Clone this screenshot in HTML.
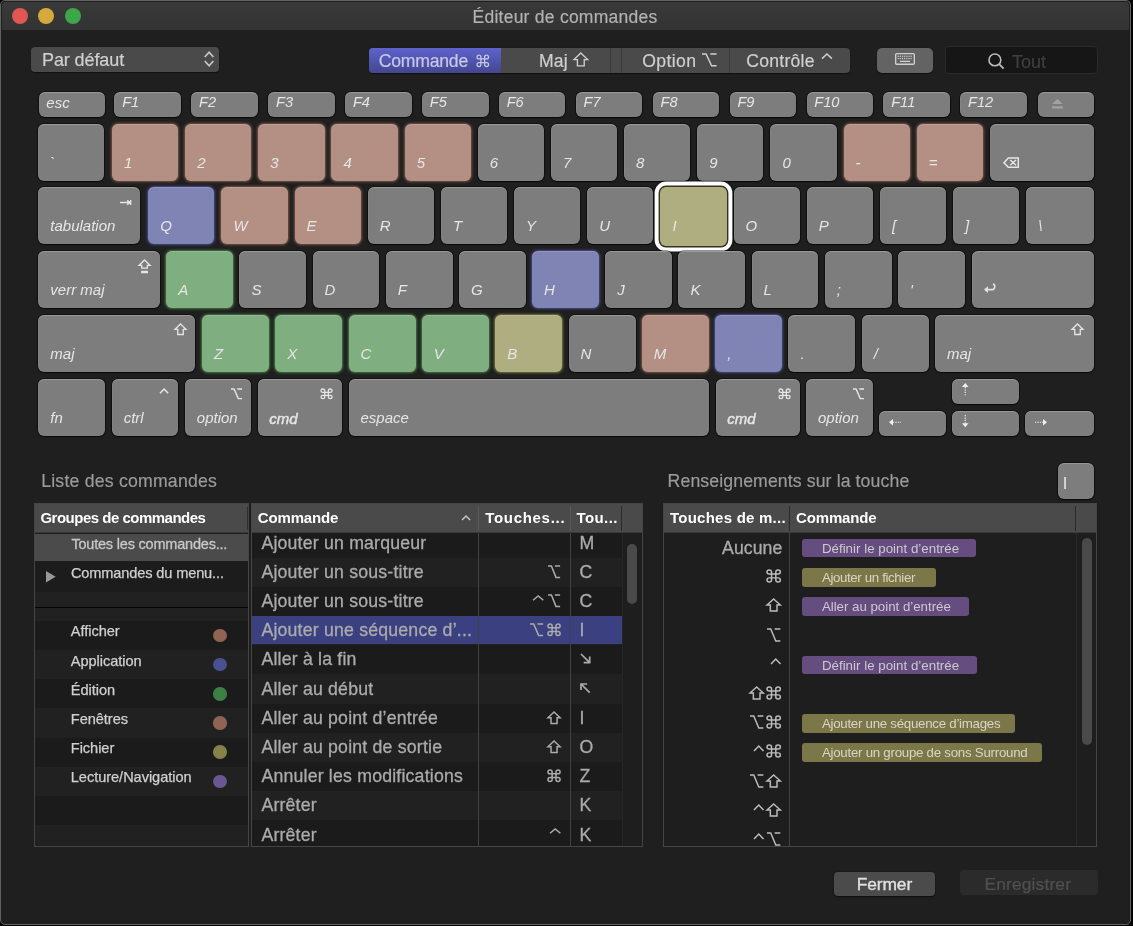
<!DOCTYPE html>
<html><head><meta charset="utf-8"><title>Éditeur de commandes</title>
<style>
html,body{margin:0;padding:0;}
body{width:1133px;height:926px;background:#000;overflow:hidden;position:relative;font-family:"Liberation Sans", sans-serif;}
#root{position:absolute;left:0;top:0;width:1133px;height:926px;will-change:transform;}
div{box-sizing:border-box;}
.k{position:absolute;background:#7d7d7d;border-radius:6px;box-shadow:0 0 0 0.8px rgba(0,0,0,0.55), 0 1px 1.5px rgba(0,0,0,0.5), inset 0 1px 0 rgba(255,255,255,0.22), inset 1px 0 0 rgba(255,255,255,0.05);}
.med{-webkit-text-stroke:0.25px currentColor;}
</style></head><body><div id="root">

<div style="position:absolute;left:0;top:0;width:1131px;height:924.6px;border-radius:5px;background:#1f1f1f;border:1.8px solid #626262"></div>
<div style="position:absolute;left:1.8px;top:1.8px;width:1127.4px;height:28.7px;border-radius:4px 4px 0 0;background:linear-gradient(#393939,#333333)"></div>
<div style="position:absolute;left:472.50px;top:8.99px;font-size:17.5px;line-height:17.5px;color:#b2b2b2;font-weight:normal;font-style:normal;letter-spacing:0.25px;white-space:nowrap;-webkit-text-stroke:0.2px #b2b2b2">Éditeur de commandes</div>
<div style="position:absolute;left:12.3px;top:8px;width:16px;height:16px;border-radius:50%;background:#df5750"></div>
<div style="position:absolute;left:38.4px;top:8px;width:16px;height:16px;border-radius:50%;background:#d5a93b"></div>
<div style="position:absolute;left:65.2px;top:8px;width:16px;height:16px;border-radius:50%;background:#3ba64a"></div>
<div style="position:absolute;left:31px;top:46.5px;width:188px;height:25.3px;border-radius:4px;background:#4a4a4a;box-shadow:0 0.5px 1px rgba(0,0,0,0.5)"></div>
<div style="position:absolute;left:42.00px;top:50.56px;font-size:18px;line-height:18px;color:#d0d0d0;font-weight:normal;font-style:normal;letter-spacing:-0.1px;white-space:nowrap;-webkit-text-stroke:0.2px #d0d0d0">Par défaut</div>
<svg style="position:absolute;left:204.20px;top:51.00px;overflow:visible" width="10.20" height="16.00" viewBox="0 0 10.2 16" preserveAspectRatio="xMinYMin meet"><path d="M0.8,6 L5.1,1.2 L9.4,6 M0.8,10 L5.1,14.8 L9.4,10" fill="none" stroke="#c8c8c8" stroke-width="1.7"/></svg>
<div style="position:absolute;left:369.2px;top:48px;width:480.5px;height:24.8px;border-radius:4px;background:#4a4a4a;overflow:hidden;box-shadow:0 0.5px 1px rgba(0,0,0,0.5)">
<div style="position:absolute;left:0;top:0;width:131.7px;height:24.8px;background:linear-gradient(#5e62cc,#43478f)"></div>
<div style="position:absolute;left:240.5px;top:0;width:1px;height:24.8px;background:#3c3c3c"></div>
<div style="position:absolute;left:251.5px;top:0;width:1px;height:24.8px;background:#3c3c3c"></div>
<div style="position:absolute;left:359.8px;top:0;width:1px;height:24.8px;background:#3c3c3c"></div>
</div>
<div style="position:absolute;left:378.70px;top:52.60px;font-size:17.6px;line-height:17.6px;color:#c6c8e8;font-weight:normal;font-style:normal;letter-spacing:-0.2px;white-space:nowrap;-webkit-text-stroke:0.2px #c6c8e8">Commande</div>
<svg style="position:absolute;left:476.73px;top:54.83px;overflow:visible" width="11.55" height="11.55" viewBox="0 0 100 100" preserveAspectRatio="none"><path d="M34,17 A17,17 0 1,0 17,34 L83,34 A17,17 0 1,0 66,17 L66,83 A17,17 0 1,0 83,66 L17,66 A17,17 0 1,0 34,83 Z" fill="none" stroke="#c6c8e8" stroke-width="1.25" vector-effect="non-scaling-stroke" stroke-linejoin="miter" stroke-linecap="butt"/></svg>
<div style="position:absolute;left:538.90px;top:52.60px;font-size:17.6px;line-height:17.6px;color:#cfcfcf;font-weight:normal;font-style:normal;letter-spacing:0.2px;white-space:nowrap;-webkit-text-stroke:0.2px #cfcfcf">Maj</div>
<svg style="position:absolute;left:573.67px;top:53.07px;overflow:visible" width="13.65" height="12.95" viewBox="0 0 100 100" preserveAspectRatio="none"><path d="M50,0 L100,51 H75 V100 H25 V51 H0 Z" fill="none" stroke="#cfcfcf" stroke-width="1.35" vector-effect="non-scaling-stroke" stroke-linejoin="miter" stroke-linecap="butt"/></svg>
<div style="position:absolute;left:642.20px;top:52.60px;font-size:17.6px;line-height:17.6px;color:#cfcfcf;font-weight:normal;font-style:normal;letter-spacing:0.4px;white-space:nowrap;-webkit-text-stroke:0.2px #cfcfcf">Option</div>
<svg style="position:absolute;left:701.62px;top:54.02px;overflow:visible" width="14.55" height="11.85" viewBox="0 0 100 100" preserveAspectRatio="none"><path d="M0,0 H28 L66,100 H100 M57,0 H100" fill="none" stroke="#cfcfcf" stroke-width="1.45" vector-effect="non-scaling-stroke" stroke-linejoin="miter" stroke-linecap="butt"/></svg>
<div style="position:absolute;left:746.30px;top:52.60px;font-size:17.6px;line-height:17.6px;color:#cfcfcf;font-weight:normal;font-style:normal;letter-spacing:0.24px;white-space:nowrap;-webkit-text-stroke:0.2px #cfcfcf">Contrôle</div>
<svg style="position:absolute;left:821.55px;top:54.45px;overflow:visible" width="9.90" height="4.60" viewBox="0 0 100 100" preserveAspectRatio="none"><path d="M0,100 L50,0 L100,100" fill="none" stroke="#cfcfcf" stroke-width="1.5" vector-effect="non-scaling-stroke" stroke-linejoin="miter" stroke-linecap="butt"/></svg>
<div style="position:absolute;left:877px;top:48px;width:55.7px;height:25.3px;border-radius:5px;background:#636363;box-shadow:0 0.5px 1px rgba(0,0,0,0.5)"></div>
<svg style="position:absolute;left:895.00px;top:53.30px;overflow:visible" width="20.00" height="11.90" viewBox="0 0 21 13" preserveAspectRatio="none"><rect x="0.7" y="0.7" width="19.6" height="11.6" rx="1.2" fill="none" stroke="#d0d0d0" stroke-width="1.4"/><rect x="2.80" y="2.90" width="1.3" height="1.3" fill="#d0d0d0"/><rect x="5.05" y="2.90" width="1.3" height="1.3" fill="#d0d0d0"/><rect x="7.30" y="2.90" width="1.3" height="1.3" fill="#d0d0d0"/><rect x="9.55" y="2.90" width="1.3" height="1.3" fill="#d0d0d0"/><rect x="11.80" y="2.90" width="1.3" height="1.3" fill="#d0d0d0"/><rect x="14.05" y="2.90" width="1.3" height="1.3" fill="#d0d0d0"/><rect x="16.30" y="2.90" width="1.3" height="1.3" fill="#d0d0d0"/><rect x="2.80" y="5.40" width="1.3" height="1.3" fill="#d0d0d0"/><rect x="5.05" y="5.40" width="1.3" height="1.3" fill="#d0d0d0"/><rect x="7.30" y="5.40" width="1.3" height="1.3" fill="#d0d0d0"/><rect x="9.55" y="5.40" width="1.3" height="1.3" fill="#d0d0d0"/><rect x="11.80" y="5.40" width="1.3" height="1.3" fill="#d0d0d0"/><rect x="14.05" y="5.40" width="1.3" height="1.3" fill="#d0d0d0"/><rect x="16.30" y="5.40" width="1.3" height="1.3" fill="#d0d0d0"/><rect x="5.2" y="8.4" width="10.6" height="1.5" fill="#d0d0d0"/></svg>
<div style="position:absolute;left:945.2px;top:46px;width:153.2px;height:27.5px;border-radius:4px;background:#161616;border:1px solid #2b2b2b"></div>
<svg style="position:absolute;left:987.50px;top:53.30px;overflow:visible" width="17.00" height="17.00" viewBox="0 0 17 17" preserveAspectRatio="xMinYMin meet"><circle cx="6.9" cy="6.9" r="5.9" fill="none" stroke="#bcbcbc" stroke-width="1.6"/><path d="M11.2,11.2 L15.6,15.6" stroke="#bcbcbc" stroke-width="1.8"/></svg>
<div style="position:absolute;left:1012.00px;top:52.56px;font-size:18px;line-height:18px;color:#3f3f3f;font-weight:normal;font-style:normal;letter-spacing:0px;white-space:nowrap;-webkit-text-stroke:0.2px #3f3f3f">Tout</div>
<div class="k" style="left:38.5px;top:91.6px;width:66.5px;height:25.4px;background:#7d7d7d;"></div>
<div style="position:absolute;left:46.30px;top:94.80px;font-size:15px;line-height:15px;color:#e6e6e6;font-weight:normal;font-style:italic;letter-spacing:0px;white-space:nowrap">esc</div>
<div class="k" style="left:114.4px;top:91.6px;width:66.5px;height:25.4px;background:#7d7d7d;"></div>
<div style="position:absolute;left:122.20px;top:94.84px;font-size:14.6px;line-height:14.6px;color:#e6e6e6;font-weight:normal;font-style:italic;letter-spacing:0px;white-space:nowrap">F1</div>
<div class="k" style="left:191.3px;top:91.6px;width:66.5px;height:25.4px;background:#7d7d7d;"></div>
<div style="position:absolute;left:199.10px;top:94.84px;font-size:14.6px;line-height:14.6px;color:#e6e6e6;font-weight:normal;font-style:italic;letter-spacing:0px;white-space:nowrap">F2</div>
<div class="k" style="left:268.2px;top:91.6px;width:66.5px;height:25.4px;background:#7d7d7d;"></div>
<div style="position:absolute;left:276.00px;top:94.84px;font-size:14.6px;line-height:14.6px;color:#e6e6e6;font-weight:normal;font-style:italic;letter-spacing:0px;white-space:nowrap">F3</div>
<div class="k" style="left:345.1px;top:91.6px;width:66.5px;height:25.4px;background:#7d7d7d;"></div>
<div style="position:absolute;left:352.90px;top:94.84px;font-size:14.6px;line-height:14.6px;color:#e6e6e6;font-weight:normal;font-style:italic;letter-spacing:0px;white-space:nowrap">F4</div>
<div class="k" style="left:422.0px;top:91.6px;width:66.5px;height:25.4px;background:#7d7d7d;"></div>
<div style="position:absolute;left:429.80px;top:94.84px;font-size:14.6px;line-height:14.6px;color:#e6e6e6;font-weight:normal;font-style:italic;letter-spacing:0px;white-space:nowrap">F5</div>
<div class="k" style="left:498.9px;top:91.6px;width:66.5px;height:25.4px;background:#7d7d7d;"></div>
<div style="position:absolute;left:506.70px;top:94.84px;font-size:14.6px;line-height:14.6px;color:#e6e6e6;font-weight:normal;font-style:italic;letter-spacing:0px;white-space:nowrap">F6</div>
<div class="k" style="left:575.8px;top:91.6px;width:66.5px;height:25.4px;background:#7d7d7d;"></div>
<div style="position:absolute;left:583.60px;top:94.84px;font-size:14.6px;line-height:14.6px;color:#e6e6e6;font-weight:normal;font-style:italic;letter-spacing:0px;white-space:nowrap">F7</div>
<div class="k" style="left:652.7px;top:91.6px;width:66.5px;height:25.4px;background:#7d7d7d;"></div>
<div style="position:absolute;left:660.50px;top:94.84px;font-size:14.6px;line-height:14.6px;color:#e6e6e6;font-weight:normal;font-style:italic;letter-spacing:0px;white-space:nowrap">F8</div>
<div class="k" style="left:729.6px;top:91.6px;width:66.5px;height:25.4px;background:#7d7d7d;"></div>
<div style="position:absolute;left:737.40px;top:94.84px;font-size:14.6px;line-height:14.6px;color:#e6e6e6;font-weight:normal;font-style:italic;letter-spacing:0px;white-space:nowrap">F9</div>
<div class="k" style="left:806.5px;top:91.6px;width:66.5px;height:25.4px;background:#7d7d7d;"></div>
<div style="position:absolute;left:814.30px;top:94.84px;font-size:14.6px;line-height:14.6px;color:#e6e6e6;font-weight:normal;font-style:italic;letter-spacing:0px;white-space:nowrap">F10</div>
<div class="k" style="left:883.4px;top:91.6px;width:66.5px;height:25.4px;background:#7d7d7d;"></div>
<div style="position:absolute;left:891.20px;top:94.84px;font-size:14.6px;line-height:14.6px;color:#e6e6e6;font-weight:normal;font-style:italic;letter-spacing:0px;white-space:nowrap">F11</div>
<div class="k" style="left:960.3px;top:91.6px;width:66.5px;height:25.4px;background:#7d7d7d;"></div>
<div style="position:absolute;left:968.10px;top:94.84px;font-size:14.6px;line-height:14.6px;color:#e6e6e6;font-weight:normal;font-style:italic;letter-spacing:0px;white-space:nowrap">F12</div>
<div class="k" style="left:1038px;top:91.6px;width:55.5px;height:25.4px;background:#7d7d7d;"></div>
<svg style="position:absolute;left:1052.20px;top:98.70px;overflow:visible" width="10.80" height="9.50" viewBox="0 0 10.8 9.5" preserveAspectRatio="xMinYMin meet"><path d="M5.4,0 L10.8,5.1 H0 Z" fill="#a2a2a2"/><rect x="0" y="7.3" width="10.8" height="2.2" fill="#a2a2a2"/></svg>
<div class="k" style="left:38.3px;top:124px;width:66px;height:57px;background:#7d7d7d;"></div>
<div style="position:absolute;left:50.30px;top:154.50px;font-size:15px;line-height:15px;color:#e6e6e6;font-weight:normal;font-style:italic;letter-spacing:0px;white-space:nowrap">`</div>
<div class="k" style="left:112.0px;top:124px;width:66.2px;height:57px;background:#b39083;box-shadow:0 0 2.5px 0.6px rgba(210,140,110,0.5), inset 0 1px 0 rgba(255,255,255,0.16);"></div>
<div style="position:absolute;left:124.00px;top:154.50px;font-size:15px;line-height:15px;color:#e6e6e6;font-weight:normal;font-style:italic;letter-spacing:0px;white-space:nowrap">1</div>
<div class="k" style="left:185.16px;top:124px;width:66.2px;height:57px;background:#b39083;box-shadow:0 0 2.5px 0.6px rgba(210,140,110,0.5), inset 0 1px 0 rgba(255,255,255,0.16);"></div>
<div style="position:absolute;left:197.16px;top:154.50px;font-size:15px;line-height:15px;color:#e6e6e6;font-weight:normal;font-style:italic;letter-spacing:0px;white-space:nowrap">2</div>
<div class="k" style="left:258.32px;top:124px;width:66.2px;height:57px;background:#b39083;box-shadow:0 0 2.5px 0.6px rgba(210,140,110,0.5), inset 0 1px 0 rgba(255,255,255,0.16);"></div>
<div style="position:absolute;left:270.32px;top:154.50px;font-size:15px;line-height:15px;color:#e6e6e6;font-weight:normal;font-style:italic;letter-spacing:0px;white-space:nowrap">3</div>
<div class="k" style="left:331.48px;top:124px;width:66.2px;height:57px;background:#b39083;box-shadow:0 0 2.5px 0.6px rgba(210,140,110,0.5), inset 0 1px 0 rgba(255,255,255,0.16);"></div>
<div style="position:absolute;left:343.48px;top:154.50px;font-size:15px;line-height:15px;color:#e6e6e6;font-weight:normal;font-style:italic;letter-spacing:0px;white-space:nowrap">4</div>
<div class="k" style="left:404.64px;top:124px;width:66.2px;height:57px;background:#b39083;box-shadow:0 0 2.5px 0.6px rgba(210,140,110,0.5), inset 0 1px 0 rgba(255,255,255,0.16);"></div>
<div style="position:absolute;left:416.64px;top:154.50px;font-size:15px;line-height:15px;color:#e6e6e6;font-weight:normal;font-style:italic;letter-spacing:0px;white-space:nowrap">5</div>
<div class="k" style="left:477.8px;top:124px;width:66.2px;height:57px;background:#7d7d7d;"></div>
<div style="position:absolute;left:489.80px;top:154.50px;font-size:15px;line-height:15px;color:#e6e6e6;font-weight:normal;font-style:italic;letter-spacing:0px;white-space:nowrap">6</div>
<div class="k" style="left:550.96px;top:124px;width:66.2px;height:57px;background:#7d7d7d;"></div>
<div style="position:absolute;left:562.96px;top:154.50px;font-size:15px;line-height:15px;color:#e6e6e6;font-weight:normal;font-style:italic;letter-spacing:0px;white-space:nowrap">7</div>
<div class="k" style="left:624.12px;top:124px;width:66.2px;height:57px;background:#7d7d7d;"></div>
<div style="position:absolute;left:636.12px;top:154.50px;font-size:15px;line-height:15px;color:#e6e6e6;font-weight:normal;font-style:italic;letter-spacing:0px;white-space:nowrap">8</div>
<div class="k" style="left:697.28px;top:124px;width:66.2px;height:57px;background:#7d7d7d;"></div>
<div style="position:absolute;left:709.28px;top:154.50px;font-size:15px;line-height:15px;color:#e6e6e6;font-weight:normal;font-style:italic;letter-spacing:0px;white-space:nowrap">9</div>
<div class="k" style="left:770.44px;top:124px;width:66.2px;height:57px;background:#7d7d7d;"></div>
<div style="position:absolute;left:782.44px;top:154.50px;font-size:15px;line-height:15px;color:#e6e6e6;font-weight:normal;font-style:italic;letter-spacing:0px;white-space:nowrap">0</div>
<div class="k" style="left:843.6px;top:124px;width:66.2px;height:57px;background:#b39083;box-shadow:0 0 2.5px 0.6px rgba(210,140,110,0.5), inset 0 1px 0 rgba(255,255,255,0.16);"></div>
<div style="position:absolute;left:855.60px;top:154.50px;font-size:15px;line-height:15px;color:#e6e6e6;font-weight:normal;font-style:italic;letter-spacing:0px;white-space:nowrap">-</div>
<div class="k" style="left:916.76px;top:124px;width:66.2px;height:57px;background:#b39083;box-shadow:0 0 2.5px 0.6px rgba(210,140,110,0.5), inset 0 1px 0 rgba(255,255,255,0.16);"></div>
<div style="position:absolute;left:928.76px;top:154.50px;font-size:15px;line-height:15px;color:#e6e6e6;font-weight:normal;font-style:italic;letter-spacing:0px;white-space:nowrap">=</div>
<div class="k" style="left:990px;top:124px;width:103.5px;height:57px;background:#7d7d7d;"></div>
<svg style="position:absolute;left:1003.75px;top:157.55px;overflow:visible" width="14.30" height="9.30" viewBox="0 0 100 100" preserveAspectRatio="none"><path d="M30,0 H100 V100 H30 L0,50 Z M44,22 L84,78 M84,22 L44,78" fill="none" stroke="#e6e6e6" stroke-width="1.5" vector-effect="non-scaling-stroke" stroke-linejoin="miter" stroke-linecap="butt"/></svg>
<div class="k" style="left:38.3px;top:187.4px;width:102px;height:57px;background:#7d7d7d;"></div>
<div style="position:absolute;left:50.30px;top:217.90px;font-size:15px;line-height:15px;color:#e6e6e6;font-weight:normal;font-style:italic;letter-spacing:0px;white-space:nowrap">tabulation</div>
<svg style="position:absolute;left:120.45px;top:199.55px;overflow:visible" width="10.70" height="5.00" viewBox="0 0 100 100" preserveAspectRatio="none"><path d="M0,50 H95 M66,8 L95,50 L66,92 M100,0 V100" fill="none" stroke="#e6e6e6" stroke-width="1.3" vector-effect="non-scaling-stroke" stroke-linejoin="miter" stroke-linecap="butt"/></svg>
<div class="k" style="left:148.3px;top:187.4px;width:66.2px;height:57px;background:#7f84b4;box-shadow:0 0 2.5px 0.6px rgba(110,120,240,0.5), inset 0 1px 0 rgba(255,255,255,0.16);"></div>
<div style="position:absolute;left:160.30px;top:217.90px;font-size:15px;line-height:15px;color:#e6e6e6;font-weight:normal;font-style:italic;letter-spacing:0px;white-space:nowrap">Q</div>
<div class="k" style="left:221.46px;top:187.4px;width:66.2px;height:57px;background:#b39083;box-shadow:0 0 2.5px 0.6px rgba(210,140,110,0.5), inset 0 1px 0 rgba(255,255,255,0.16);"></div>
<div style="position:absolute;left:233.46px;top:217.90px;font-size:15px;line-height:15px;color:#e6e6e6;font-weight:normal;font-style:italic;letter-spacing:0px;white-space:nowrap">W</div>
<div class="k" style="left:294.62px;top:187.4px;width:66.2px;height:57px;background:#b39083;box-shadow:0 0 2.5px 0.6px rgba(210,140,110,0.5), inset 0 1px 0 rgba(255,255,255,0.16);"></div>
<div style="position:absolute;left:306.62px;top:217.90px;font-size:15px;line-height:15px;color:#e6e6e6;font-weight:normal;font-style:italic;letter-spacing:0px;white-space:nowrap">E</div>
<div class="k" style="left:367.78px;top:187.4px;width:66.2px;height:57px;background:#7d7d7d;"></div>
<div style="position:absolute;left:379.78px;top:217.90px;font-size:15px;line-height:15px;color:#e6e6e6;font-weight:normal;font-style:italic;letter-spacing:0px;white-space:nowrap">R</div>
<div class="k" style="left:440.94px;top:187.4px;width:66.2px;height:57px;background:#7d7d7d;"></div>
<div style="position:absolute;left:452.94px;top:217.90px;font-size:15px;line-height:15px;color:#e6e6e6;font-weight:normal;font-style:italic;letter-spacing:0px;white-space:nowrap">T</div>
<div class="k" style="left:514.1px;top:187.4px;width:66.2px;height:57px;background:#7d7d7d;"></div>
<div style="position:absolute;left:526.10px;top:217.90px;font-size:15px;line-height:15px;color:#e6e6e6;font-weight:normal;font-style:italic;letter-spacing:0px;white-space:nowrap">Y</div>
<div class="k" style="left:587.26px;top:187.4px;width:66.2px;height:57px;background:#7d7d7d;"></div>
<div style="position:absolute;left:599.26px;top:217.90px;font-size:15px;line-height:15px;color:#e6e6e6;font-weight:normal;font-style:italic;letter-spacing:0px;white-space:nowrap">U</div>
<div class="k" style="left:659.8px;top:186.6px;width:67.6px;height:59px;background:#afae80;box-shadow:0 0 0 1.4px #34331f, 0 0 0 5.4px #ffffff, 0 0 1.5px 5.6px rgba(0,0,0,0.6);border-radius:6px;"></div>
<div style="position:absolute;left:672.40px;top:218.20px;font-size:15px;line-height:15px;color:#e6e6e6;font-weight:normal;font-style:italic;letter-spacing:0px;white-space:nowrap">I</div>
<div class="k" style="left:733.58px;top:187.4px;width:66.2px;height:57px;background:#7d7d7d;"></div>
<div style="position:absolute;left:745.58px;top:217.90px;font-size:15px;line-height:15px;color:#e6e6e6;font-weight:normal;font-style:italic;letter-spacing:0px;white-space:nowrap">O</div>
<div class="k" style="left:806.74px;top:187.4px;width:66.2px;height:57px;background:#7d7d7d;"></div>
<div style="position:absolute;left:818.74px;top:217.90px;font-size:15px;line-height:15px;color:#e6e6e6;font-weight:normal;font-style:italic;letter-spacing:0px;white-space:nowrap">P</div>
<div class="k" style="left:879.9px;top:187.4px;width:66.2px;height:57px;background:#7d7d7d;"></div>
<div style="position:absolute;left:891.90px;top:217.90px;font-size:15px;line-height:15px;color:#e6e6e6;font-weight:normal;font-style:italic;letter-spacing:0px;white-space:nowrap">[</div>
<div class="k" style="left:953.06px;top:187.4px;width:66.2px;height:57px;background:#7d7d7d;"></div>
<div style="position:absolute;left:965.06px;top:217.90px;font-size:15px;line-height:15px;color:#e6e6e6;font-weight:normal;font-style:italic;letter-spacing:0px;white-space:nowrap">]</div>
<div class="k" style="left:1026.22px;top:187.4px;width:67.3px;height:57px;background:#7d7d7d;"></div>
<div style="position:absolute;left:1038.22px;top:217.90px;font-size:15px;line-height:15px;color:#e6e6e6;font-weight:normal;font-style:italic;letter-spacing:0px;white-space:nowrap">\</div>
<div class="k" style="left:38.3px;top:251.2px;width:121.7px;height:57px;background:#7d7d7d;"></div>
<div style="position:absolute;left:50.30px;top:281.70px;font-size:15px;line-height:15px;color:#e6e6e6;font-weight:normal;font-style:italic;letter-spacing:0px;white-space:nowrap">verr maj</div>
<svg style="position:absolute;left:138.65px;top:260.35px;overflow:visible" width="11.10" height="12.70" viewBox="0 0 100 100" preserveAspectRatio="none"><path d="M50,0 L100,43 H75 V64 H25 V43 H0 Z M25,89 H75 V100 H25 Z" fill="none" stroke="#e6e6e6" stroke-width="1.3" vector-effect="non-scaling-stroke" stroke-linejoin="miter" stroke-linecap="butt"/></svg>
<div class="k" style="left:166.3px;top:251.2px;width:66.8px;height:57px;background:#7fae80;box-shadow:0 0 2.5px 0.6px rgba(110,210,110,0.5), inset 0 1px 0 rgba(255,255,255,0.16);"></div>
<div style="position:absolute;left:178.30px;top:281.70px;font-size:15px;line-height:15px;color:#e6e6e6;font-weight:normal;font-style:italic;letter-spacing:0px;white-space:nowrap">A</div>
<div class="k" style="left:239.46px;top:251.2px;width:66.8px;height:57px;background:#7d7d7d;"></div>
<div style="position:absolute;left:251.46px;top:281.70px;font-size:15px;line-height:15px;color:#e6e6e6;font-weight:normal;font-style:italic;letter-spacing:0px;white-space:nowrap">S</div>
<div class="k" style="left:312.62px;top:251.2px;width:66.8px;height:57px;background:#7d7d7d;"></div>
<div style="position:absolute;left:324.62px;top:281.70px;font-size:15px;line-height:15px;color:#e6e6e6;font-weight:normal;font-style:italic;letter-spacing:0px;white-space:nowrap">D</div>
<div class="k" style="left:385.78px;top:251.2px;width:66.8px;height:57px;background:#7d7d7d;"></div>
<div style="position:absolute;left:397.78px;top:281.70px;font-size:15px;line-height:15px;color:#e6e6e6;font-weight:normal;font-style:italic;letter-spacing:0px;white-space:nowrap">F</div>
<div class="k" style="left:458.94px;top:251.2px;width:66.8px;height:57px;background:#7d7d7d;"></div>
<div style="position:absolute;left:470.94px;top:281.70px;font-size:15px;line-height:15px;color:#e6e6e6;font-weight:normal;font-style:italic;letter-spacing:0px;white-space:nowrap">G</div>
<div class="k" style="left:532.1px;top:251.2px;width:66.8px;height:57px;background:#7f84b4;box-shadow:0 0 2.5px 0.6px rgba(110,120,240,0.5), inset 0 1px 0 rgba(255,255,255,0.16);"></div>
<div style="position:absolute;left:544.10px;top:281.70px;font-size:15px;line-height:15px;color:#e6e6e6;font-weight:normal;font-style:italic;letter-spacing:0px;white-space:nowrap">H</div>
<div class="k" style="left:605.26px;top:251.2px;width:66.8px;height:57px;background:#7d7d7d;"></div>
<div style="position:absolute;left:617.26px;top:281.70px;font-size:15px;line-height:15px;color:#e6e6e6;font-weight:normal;font-style:italic;letter-spacing:0px;white-space:nowrap">J</div>
<div class="k" style="left:678.42px;top:251.2px;width:66.8px;height:57px;background:#7d7d7d;"></div>
<div style="position:absolute;left:690.42px;top:281.70px;font-size:15px;line-height:15px;color:#e6e6e6;font-weight:normal;font-style:italic;letter-spacing:0px;white-space:nowrap">K</div>
<div class="k" style="left:751.58px;top:251.2px;width:66.8px;height:57px;background:#7d7d7d;"></div>
<div style="position:absolute;left:763.58px;top:281.70px;font-size:15px;line-height:15px;color:#e6e6e6;font-weight:normal;font-style:italic;letter-spacing:0px;white-space:nowrap">L</div>
<div class="k" style="left:824.74px;top:251.2px;width:66.8px;height:57px;background:#7d7d7d;"></div>
<div style="position:absolute;left:836.74px;top:281.70px;font-size:15px;line-height:15px;color:#e6e6e6;font-weight:normal;font-style:italic;letter-spacing:0px;white-space:nowrap">;</div>
<div class="k" style="left:897.9px;top:251.2px;width:66.8px;height:57px;background:#7d7d7d;"></div>
<div style="position:absolute;left:909.90px;top:281.70px;font-size:15px;line-height:15px;color:#e6e6e6;font-weight:normal;font-style:italic;letter-spacing:0px;white-space:nowrap">'</div>
<div class="k" style="left:971.5px;top:251.2px;width:122px;height:57px;background:#7d7d7d;"></div>
<svg style="position:absolute;left:984.30px;top:283.20px;overflow:visible" width="13.00" height="10.50" viewBox="0 0 13 10.5" preserveAspectRatio="xMinYMin meet"><path d="M0,6.6 L3.9,3.2 V10 Z" fill="#e6e6e6"/><path d="M3.5,6.6 H9.1 A3.3,3.3 0 0,0 9.1,0.8" fill="none" stroke="#e6e6e6" stroke-width="1.6"/></svg>
<div class="k" style="left:38.3px;top:315.2px;width:156.7px;height:57px;background:#7d7d7d;"></div>
<div style="position:absolute;left:50.30px;top:345.70px;font-size:15px;line-height:15px;color:#e6e6e6;font-weight:normal;font-style:italic;letter-spacing:0px;white-space:nowrap">maj</div>
<svg style="position:absolute;left:174.65px;top:324.15px;overflow:visible" width="11.00" height="10.50" viewBox="0 0 100 100" preserveAspectRatio="none"><path d="M50,0 L100,51 H75 V100 H25 V51 H0 Z" fill="none" stroke="#e6e6e6" stroke-width="1.3" vector-effect="non-scaling-stroke" stroke-linejoin="miter" stroke-linecap="butt"/></svg>
<div class="k" style="left:201.9px;top:315.2px;width:67px;height:57px;background:#7fae80;box-shadow:0 0 2.5px 0.6px rgba(110,210,110,0.5), inset 0 1px 0 rgba(255,255,255,0.16);"></div>
<div style="position:absolute;left:213.90px;top:345.70px;font-size:15px;line-height:15px;color:#e6e6e6;font-weight:normal;font-style:italic;letter-spacing:0px;white-space:nowrap">Z</div>
<div class="k" style="left:275.22px;top:315.2px;width:67px;height:57px;background:#7fae80;box-shadow:0 0 2.5px 0.6px rgba(110,210,110,0.5), inset 0 1px 0 rgba(255,255,255,0.16);"></div>
<div style="position:absolute;left:287.22px;top:345.70px;font-size:15px;line-height:15px;color:#e6e6e6;font-weight:normal;font-style:italic;letter-spacing:0px;white-space:nowrap">X</div>
<div class="k" style="left:348.54px;top:315.2px;width:67px;height:57px;background:#7fae80;box-shadow:0 0 2.5px 0.6px rgba(110,210,110,0.5), inset 0 1px 0 rgba(255,255,255,0.16);"></div>
<div style="position:absolute;left:360.54px;top:345.70px;font-size:15px;line-height:15px;color:#e6e6e6;font-weight:normal;font-style:italic;letter-spacing:0px;white-space:nowrap">C</div>
<div class="k" style="left:421.86px;top:315.2px;width:67px;height:57px;background:#7fae80;box-shadow:0 0 2.5px 0.6px rgba(110,210,110,0.5), inset 0 1px 0 rgba(255,255,255,0.16);"></div>
<div style="position:absolute;left:433.86px;top:345.70px;font-size:15px;line-height:15px;color:#e6e6e6;font-weight:normal;font-style:italic;letter-spacing:0px;white-space:nowrap">V</div>
<div class="k" style="left:495.18px;top:315.2px;width:67px;height:57px;background:#afae80;box-shadow:0 0 2.5px 0.6px rgba(210,210,110,0.5), inset 0 1px 0 rgba(255,255,255,0.16);"></div>
<div style="position:absolute;left:507.18px;top:345.70px;font-size:15px;line-height:15px;color:#e6e6e6;font-weight:normal;font-style:italic;letter-spacing:0px;white-space:nowrap">B</div>
<div class="k" style="left:568.5px;top:315.2px;width:67px;height:57px;background:#7d7d7d;"></div>
<div style="position:absolute;left:580.50px;top:345.70px;font-size:15px;line-height:15px;color:#e6e6e6;font-weight:normal;font-style:italic;letter-spacing:0px;white-space:nowrap">N</div>
<div class="k" style="left:641.82px;top:315.2px;width:67px;height:57px;background:#b39083;box-shadow:0 0 2.5px 0.6px rgba(210,140,110,0.5), inset 0 1px 0 rgba(255,255,255,0.16);"></div>
<div style="position:absolute;left:653.82px;top:345.70px;font-size:15px;line-height:15px;color:#e6e6e6;font-weight:normal;font-style:italic;letter-spacing:0px;white-space:nowrap">M</div>
<div class="k" style="left:715.14px;top:315.2px;width:67px;height:57px;background:#7f84b4;box-shadow:0 0 2.5px 0.6px rgba(110,120,240,0.5), inset 0 1px 0 rgba(255,255,255,0.16);"></div>
<div style="position:absolute;left:727.14px;top:345.70px;font-size:15px;line-height:15px;color:#e6e6e6;font-weight:normal;font-style:italic;letter-spacing:0px;white-space:nowrap">,</div>
<div class="k" style="left:788.46px;top:315.2px;width:67px;height:57px;background:#7d7d7d;"></div>
<div style="position:absolute;left:800.46px;top:345.70px;font-size:15px;line-height:15px;color:#e6e6e6;font-weight:normal;font-style:italic;letter-spacing:0px;white-space:nowrap">.</div>
<div class="k" style="left:861.78px;top:315.2px;width:67px;height:57px;background:#7d7d7d;"></div>
<div style="position:absolute;left:873.78px;top:345.70px;font-size:15px;line-height:15px;color:#e6e6e6;font-weight:normal;font-style:italic;letter-spacing:0px;white-space:nowrap">/</div>
<div class="k" style="left:935px;top:315.2px;width:158.5px;height:57px;background:#7d7d7d;"></div>
<div style="position:absolute;left:947.00px;top:345.70px;font-size:15px;line-height:15px;color:#e6e6e6;font-weight:normal;font-style:italic;letter-spacing:0px;white-space:nowrap">maj</div>
<svg style="position:absolute;left:1071.65px;top:324.15px;overflow:visible" width="11.00" height="10.50" viewBox="0 0 100 100" preserveAspectRatio="none"><path d="M50,0 L100,51 H75 V100 H25 V51 H0 Z" fill="none" stroke="#e6e6e6" stroke-width="1.3" vector-effect="non-scaling-stroke" stroke-linejoin="miter" stroke-linecap="butt"/></svg>
<div class="k" style="left:38.3px;top:379px;width:66.3px;height:57px;background:#7d7d7d;"></div>
<div style="position:absolute;left:50.30px;top:409.50px;font-size:15px;line-height:15px;color:#e6e6e6;font-weight:normal;font-style:italic;letter-spacing:0px;white-space:nowrap">fn</div>
<div class="k" style="left:111.7px;top:379px;width:66.3px;height:57px;background:#7d7d7d;"></div>
<div style="position:absolute;left:123.70px;top:409.50px;font-size:15px;line-height:15px;color:#e6e6e6;font-weight:normal;font-style:italic;letter-spacing:0px;white-space:nowrap">ctrl</div>
<svg style="position:absolute;left:160.45px;top:388.75px;overflow:visible" width="8.20" height="4.30" viewBox="0 0 100 100" preserveAspectRatio="none"><path d="M0,100 L50,0 L100,100" fill="none" stroke="#e6e6e6" stroke-width="1.5" vector-effect="non-scaling-stroke" stroke-linejoin="miter" stroke-linecap="butt"/></svg>
<div class="k" style="left:184.8px;top:379px;width:66.3px;height:57px;background:#7d7d7d;"></div>
<div style="position:absolute;left:196.80px;top:409.50px;font-size:15px;line-height:15px;color:#e6e6e6;font-weight:normal;font-style:italic;letter-spacing:0px;white-space:nowrap">option</div>
<svg style="position:absolute;left:231.00px;top:388.70px;overflow:visible" width="11.00" height="9.60" viewBox="0 0 100 100" preserveAspectRatio="none"><path d="M0,0 H28 L66,100 H100 M57,0 H100" fill="none" stroke="#e6e6e6" stroke-width="1.4" vector-effect="non-scaling-stroke" stroke-linejoin="miter" stroke-linecap="butt"/></svg>
<div class="k" style="left:258px;top:379px;width:83.5px;height:57px;background:#7d7d7d;"></div>
<div style="position:absolute;left:269.20px;top:411.30px;font-size:15px;line-height:15px;color:#e6e6e6;font-weight:normal;font-style:italic;letter-spacing:0px;white-space:nowrap;-webkit-text-stroke:0.45px #e6e6e6">cmd</div>
<svg style="position:absolute;left:320.95px;top:388.65px;overflow:visible" width="11.10" height="9.70" viewBox="0 0 100 100" preserveAspectRatio="none"><path d="M34,17 A17,17 0 1,0 17,34 L83,34 A17,17 0 1,0 66,17 L66,83 A17,17 0 1,0 83,66 L17,66 A17,17 0 1,0 34,83 Z" fill="none" stroke="#e6e6e6" stroke-width="1.3" vector-effect="non-scaling-stroke" stroke-linejoin="miter" stroke-linecap="butt"/></svg>
<div class="k" style="left:348.5px;top:379px;width:360.5px;height:57px;background:#7d7d7d;"></div>
<div style="position:absolute;left:360.50px;top:409.50px;font-size:15px;line-height:15px;color:#e6e6e6;font-weight:normal;font-style:italic;letter-spacing:0px;white-space:nowrap">espace</div>
<div class="k" style="left:716px;top:379px;width:83.5px;height:57px;background:#7d7d7d;"></div>
<div style="position:absolute;left:727.20px;top:411.30px;font-size:15px;line-height:15px;color:#e6e6e6;font-weight:normal;font-style:italic;letter-spacing:0px;white-space:nowrap;-webkit-text-stroke:0.45px #e6e6e6">cmd</div>
<svg style="position:absolute;left:778.95px;top:388.65px;overflow:visible" width="11.10" height="9.70" viewBox="0 0 100 100" preserveAspectRatio="none"><path d="M34,17 A17,17 0 1,0 17,34 L83,34 A17,17 0 1,0 66,17 L66,83 A17,17 0 1,0 83,66 L17,66 A17,17 0 1,0 34,83 Z" fill="none" stroke="#e6e6e6" stroke-width="1.3" vector-effect="non-scaling-stroke" stroke-linejoin="miter" stroke-linecap="butt"/></svg>
<div class="k" style="left:806px;top:379px;width:66.5px;height:57px;background:#7d7d7d;"></div>
<div style="position:absolute;left:818.00px;top:409.50px;font-size:15px;line-height:15px;color:#e6e6e6;font-weight:normal;font-style:italic;letter-spacing:0px;white-space:nowrap">option</div>
<svg style="position:absolute;left:853.00px;top:388.70px;overflow:visible" width="11.00" height="9.60" viewBox="0 0 100 100" preserveAspectRatio="none"><path d="M0,0 H28 L66,100 H100 M57,0 H100" fill="none" stroke="#e6e6e6" stroke-width="1.4" vector-effect="non-scaling-stroke" stroke-linejoin="miter" stroke-linecap="butt"/></svg>
<div class="k" style="left:879.4px;top:411px;width:66.3px;height:25.3px;background:#7d7d7d;"></div>
<svg style="position:absolute;left:889.00px;top:418.50px;overflow:visible" width="12.00" height="6.50" viewBox="0 0 12 6.5" preserveAspectRatio="xMinYMin meet"><path d="M0,3.25 L4,0 V6.5 Z" fill="#f0f0f0"/><path d="M4,3.25 H12" stroke="#f0f0f0" stroke-width="1.2" stroke-dasharray="1.3,1.1"/></svg>
<div class="k" style="left:952.4px;top:379px;width:66.4px;height:25.4px;background:#7d7d7d;"></div>
<svg style="position:absolute;left:961.80px;top:383.00px;overflow:visible" width="6.50" height="12.30" viewBox="0 0 6.5 12.3" preserveAspectRatio="xMinYMin meet"><path d="M3.25,0 L6.5,4 H0 Z" fill="#f0f0f0"/><path d="M3.25,4 V12.3" stroke="#f0f0f0" stroke-width="1.2" stroke-dasharray="1.3,1.1"/></svg>
<div class="k" style="left:952.4px;top:411px;width:66.4px;height:25.3px;background:#7d7d7d;"></div>
<svg style="position:absolute;left:962.00px;top:414.70px;overflow:visible" width="6.50" height="12.30" viewBox="0 0 6.5 12.3" preserveAspectRatio="xMinYMin meet"><path d="M3.25,12.3 L6.5,8.3 H0 Z" fill="#f0f0f0"/><path d="M3.25,0 V8.3" stroke="#f0f0f0" stroke-width="1.2" stroke-dasharray="1.3,1.1"/></svg>
<div class="k" style="left:1025.4px;top:411px;width:68.2px;height:25.3px;background:#7d7d7d;"></div>
<svg style="position:absolute;left:1034.80px;top:418.50px;overflow:visible" width="12.00" height="6.50" viewBox="0 0 12 6.5" preserveAspectRatio="xMinYMin meet"><path d="M12,3.25 L8,0 V6.5 Z" fill="#f0f0f0"/><path d="M0,3.25 H8" stroke="#f0f0f0" stroke-width="1.2" stroke-dasharray="1.3,1.1"/></svg>
<div style="position:absolute;left:41.20px;top:472.52px;font-size:17.7px;line-height:17.7px;color:#9a9a9a;font-weight:normal;font-style:normal;letter-spacing:0.2px;white-space:nowrap;-webkit-text-stroke:0.2px #9a9a9a">Liste des commandes</div>
<div style="position:absolute;left:667.60px;top:472.62px;font-size:17.7px;line-height:17.7px;color:#9a9a9a;font-weight:normal;font-style:normal;letter-spacing:0.1px;white-space:nowrap;-webkit-text-stroke:0.2px #9a9a9a">Renseignements sur la touche</div>
<div class="k" style="left:1057.8px;top:463.4px;width:35.9px;height:35.3px;background:#7d7d7d;"></div>
<div style="position:absolute;left:1062.80px;top:474.93px;font-size:16.5px;line-height:16.5px;color:#e6e6e6;font-weight:normal;font-style:normal;letter-spacing:0px;white-space:nowrap">I</div>
<div style="position:absolute;left:33.5px;top:503px;width:215.5px;height:343.6px;background:#1b1b1b;border:1px solid #454545"></div>
<div style="position:absolute;left:34.5px;top:504px;width:213.5px;height:28.799999999999955px;background:#4a4a4a;border-bottom:1px solid #3a3a3a"></div>
<div style="position:absolute;left:246.6px;top:507px;width:1.5px;height:23px;background:#2e2e2e;"></div>
<div style="position:absolute;left:40.40px;top:510.30px;font-size:15px;line-height:15px;color:#ffffff;font-weight:bold;font-style:normal;letter-spacing:-0.5px;white-space:nowrap">Groupes de commandes</div>
<div style="position:absolute;left:34.5px;top:533.5px;width:213.5px;height:27.8px;background:#4b4b4b;"></div>
<div style="position:absolute;left:71.40px;top:536.73px;font-size:14.5px;line-height:14.5px;color:#c8c8c8;font-weight:normal;font-style:normal;letter-spacing:-0.2px;white-space:nowrap;-webkit-text-stroke:0.3px #c8c8c8">Toutes les commandes...</div>
<div style="position:absolute;left:34.5px;top:561.3px;width:213.5px;height:30.7px;background:#1c1c1c;"></div>
<div style="position:absolute;left:34.5px;top:592px;width:213.5px;height:14.5px;background:#212121;"></div>
<svg style="position:absolute;left:46.20px;top:571.20px;overflow:visible" width="9.70" height="11.50" viewBox="0 0 9.7 11.5" preserveAspectRatio="none"><path d="M0,0 L9.7,5.75 L0,11.5 Z" fill="#999999"/></svg>
<div class="med" style="position:absolute;left:0;top:0"><div style="position:absolute;left:70.90px;top:566.34px;font-size:14.6px;line-height:14.6px;color:#d0d0d0;font-weight:normal;font-style:normal;letter-spacing:-0.14px;white-space:nowrap">Commandes du menu...</div></div>
<div style="position:absolute;left:34.5px;top:606.6px;width:213.5px;height:1.3px;background:#050505;"></div>
<div style="position:absolute;left:34.5px;top:608.2px;width:213.5px;height:12.5px;background:#212121;"></div>
<div style="position:absolute;left:34.5px;top:620.7px;width:213.5px;height:29.25px;background:#1b1b1b;"></div>
<div style="position:absolute;left:34.5px;top:649.95px;width:213.5px;height:29.25px;background:#212121;"></div>
<div style="position:absolute;left:34.5px;top:679.2px;width:213.5px;height:29.25px;background:#1b1b1b;"></div>
<div style="position:absolute;left:34.5px;top:708.45px;width:213.5px;height:29.25px;background:#212121;"></div>
<div style="position:absolute;left:34.5px;top:737.7px;width:213.5px;height:29.25px;background:#1b1b1b;"></div>
<div style="position:absolute;left:34.5px;top:766.95px;width:213.5px;height:29.25px;background:#212121;"></div>
<div style="position:absolute;left:34.5px;top:796.2px;width:213.5px;height:29.25px;background:#1b1b1b;"></div>
<div style="position:absolute;left:34.5px;top:825.45px;width:213.5px;height:20.15px;background:#212121;"></div>
<div class="med" style="position:absolute;left:0;top:0"><div style="position:absolute;left:70.80px;top:624.34px;font-size:14.6px;line-height:14.6px;color:#d0d0d0;font-weight:normal;font-style:normal;letter-spacing:-0.05px;white-space:nowrap">Afficher</div></div>
<div style="position:absolute;left:213.3px;top:628.60px;width:13.5px;height:13.5px;border-radius:50%;background:#916352"></div>
<div class="med" style="position:absolute;left:0;top:0"><div style="position:absolute;left:70.80px;top:653.54px;font-size:14.6px;line-height:14.6px;color:#d0d0d0;font-weight:normal;font-style:normal;letter-spacing:-0.05px;white-space:nowrap">Application</div></div>
<div style="position:absolute;left:213.3px;top:657.80px;width:13.5px;height:13.5px;border-radius:50%;background:#4a5190"></div>
<div class="med" style="position:absolute;left:0;top:0"><div style="position:absolute;left:70.80px;top:682.74px;font-size:14.6px;line-height:14.6px;color:#d0d0d0;font-weight:normal;font-style:normal;letter-spacing:-0.05px;white-space:nowrap">Édition</div></div>
<div style="position:absolute;left:213.3px;top:687.00px;width:13.5px;height:13.5px;border-radius:50%;background:#3d8046"></div>
<div class="med" style="position:absolute;left:0;top:0"><div style="position:absolute;left:70.80px;top:711.94px;font-size:14.6px;line-height:14.6px;color:#d0d0d0;font-weight:normal;font-style:normal;letter-spacing:-0.05px;white-space:nowrap">Fenêtres</div></div>
<div style="position:absolute;left:213.3px;top:716.20px;width:13.5px;height:13.5px;border-radius:50%;background:#916352"></div>
<div class="med" style="position:absolute;left:0;top:0"><div style="position:absolute;left:70.80px;top:741.14px;font-size:14.6px;line-height:14.6px;color:#d0d0d0;font-weight:normal;font-style:normal;letter-spacing:-0.05px;white-space:nowrap">Fichier</div></div>
<div style="position:absolute;left:213.3px;top:745.40px;width:13.5px;height:13.5px;border-radius:50%;background:#85824b"></div>
<div class="med" style="position:absolute;left:0;top:0"><div style="position:absolute;left:70.80px;top:770.34px;font-size:14.6px;line-height:14.6px;color:#d0d0d0;font-weight:normal;font-style:normal;letter-spacing:-0.05px;white-space:nowrap">Lecture/Navigation</div></div>
<div style="position:absolute;left:213.3px;top:774.60px;width:13.5px;height:13.5px;border-radius:50%;background:#6a5690"></div>
<div style="position:absolute;left:251px;top:503px;width:392px;height:343.6px;background:#1b1b1b;border:1px solid #454545"></div>
<div style="position:absolute;left:252px;top:532.8px;width:369.5px;height:24.8px;background:#1b1b1b;"></div>
<div style="position:absolute;left:252px;top:557.6px;width:369.5px;height:29.2px;background:#212121;"></div>
<div style="position:absolute;left:252px;top:586.8px;width:369.5px;height:29.2px;background:#1b1b1b;"></div>
<div style="position:absolute;left:252px;top:616.0px;width:369.5px;height:29.2px;background:#212121;"></div>
<div style="position:absolute;left:252px;top:615.8px;width:369.5px;height:28.1px;background:#3a4080;"></div>
<div style="position:absolute;left:252px;top:645.2px;width:369.5px;height:29.2px;background:#1b1b1b;"></div>
<div style="position:absolute;left:252px;top:674.4px;width:369.5px;height:29.2px;background:#212121;"></div>
<div style="position:absolute;left:252px;top:703.6px;width:369.5px;height:29.2px;background:#1b1b1b;"></div>
<div style="position:absolute;left:252px;top:732.8px;width:369.5px;height:29.2px;background:#212121;"></div>
<div style="position:absolute;left:252px;top:762.0px;width:369.5px;height:29.2px;background:#1b1b1b;"></div>
<div style="position:absolute;left:252px;top:791.2px;width:369.5px;height:29.2px;background:#212121;"></div>
<div style="position:absolute;left:252px;top:820.4px;width:369.5px;height:25.2px;background:#1b1b1b;"></div>
<div style="position:absolute;left:261.40px;top:534.62px;font-size:17.7px;line-height:17.7px;color:#ababab;font-weight:normal;font-style:normal;letter-spacing:0.2px;white-space:nowrap;-webkit-text-stroke:0.3px #ababab">Ajouter un marqueur</div>
<div style="position:absolute;left:579.60px;top:534.62px;font-size:17.7px;line-height:17.7px;color:#ababab;font-weight:normal;font-style:normal;letter-spacing:0px;white-space:nowrap;-webkit-text-stroke:0.3px #ababab">M</div>
<div style="position:absolute;left:261.40px;top:563.82px;font-size:17.7px;line-height:17.7px;color:#ababab;font-weight:normal;font-style:normal;letter-spacing:0.2px;white-space:nowrap;-webkit-text-stroke:0.3px #ababab">Ajouter un sous-titre</div>
<svg style="position:absolute;left:548.35px;top:565.75px;overflow:visible" width="12.10" height="11.40" viewBox="0 0 100 100" preserveAspectRatio="none"><path d="M0,0 H28 L66,100 H100 M57,0 H100" fill="none" stroke="#ababab" stroke-width="1.5" vector-effect="non-scaling-stroke" stroke-linejoin="miter" stroke-linecap="butt"/></svg>
<div style="position:absolute;left:579.60px;top:563.82px;font-size:17.7px;line-height:17.7px;color:#ababab;font-weight:normal;font-style:normal;letter-spacing:0px;white-space:nowrap;-webkit-text-stroke:0.3px #ababab">C</div>
<div style="position:absolute;left:261.40px;top:593.02px;font-size:17.7px;line-height:17.7px;color:#ababab;font-weight:normal;font-style:normal;letter-spacing:0.2px;white-space:nowrap;-webkit-text-stroke:0.3px #ababab">Ajouter un sous-titre</div>
<svg style="position:absolute;left:548.35px;top:594.95px;overflow:visible" width="12.10" height="11.40" viewBox="0 0 100 100" preserveAspectRatio="none"><path d="M0,0 H28 L66,100 H100 M57,0 H100" fill="none" stroke="#ababab" stroke-width="1.5" vector-effect="non-scaling-stroke" stroke-linejoin="miter" stroke-linecap="butt"/></svg>
<svg style="position:absolute;left:533.05px;top:595.75px;overflow:visible" width="10.40" height="4.30" viewBox="0 0 100 100" preserveAspectRatio="none"><path d="M0,100 L50,0 L100,100" fill="none" stroke="#ababab" stroke-width="1.5" vector-effect="non-scaling-stroke" stroke-linejoin="miter" stroke-linecap="butt"/></svg>
<div style="position:absolute;left:579.60px;top:593.02px;font-size:17.7px;line-height:17.7px;color:#ababab;font-weight:normal;font-style:normal;letter-spacing:0px;white-space:nowrap;-webkit-text-stroke:0.3px #ababab">C</div>
<div style="position:absolute;left:261.40px;top:622.22px;font-size:17.7px;line-height:17.7px;color:#ababab;font-weight:normal;font-style:normal;letter-spacing:0.2px;white-space:nowrap;-webkit-text-stroke:0.3px #ababab">Ajouter une séquence d’...</div>
<svg style="position:absolute;left:548.35px;top:624.15px;overflow:visible" width="12.10" height="11.40" viewBox="0 0 100 100" preserveAspectRatio="none"><path d="M34,17 A17,17 0 1,0 17,34 L83,34 A17,17 0 1,0 66,17 L66,83 A17,17 0 1,0 83,66 L17,66 A17,17 0 1,0 34,83 Z" fill="none" stroke="#ababab" stroke-width="1.5" vector-effect="non-scaling-stroke" stroke-linejoin="miter" stroke-linecap="butt"/></svg>
<svg style="position:absolute;left:530.35px;top:624.15px;overflow:visible" width="13.10" height="11.40" viewBox="0 0 100 100" preserveAspectRatio="none"><path d="M0,0 H28 L66,100 H100 M57,0 H100" fill="none" stroke="#ababab" stroke-width="1.5" vector-effect="non-scaling-stroke" stroke-linejoin="miter" stroke-linecap="butt"/></svg>
<div style="position:absolute;left:579.60px;top:622.22px;font-size:17.7px;line-height:17.7px;color:#ababab;font-weight:normal;font-style:normal;letter-spacing:0px;white-space:nowrap;-webkit-text-stroke:0.3px #ababab">I</div>
<div style="position:absolute;left:261.40px;top:651.42px;font-size:17.7px;line-height:17.7px;color:#ababab;font-weight:normal;font-style:normal;letter-spacing:0.2px;white-space:nowrap;-webkit-text-stroke:0.3px #ababab">Aller à la fin</div>
<svg style="position:absolute;left:580.95px;top:654.35px;overflow:visible" width="8.70" height="8.70" viewBox="0 0 100 100" preserveAspectRatio="none"><path d="M0,0 L100,100 M100,30 V100 H30" fill="none" stroke="#ababab" stroke-width="1.7" vector-effect="non-scaling-stroke" stroke-linejoin="miter" stroke-linecap="butt"/></svg>
<div style="position:absolute;left:261.40px;top:680.62px;font-size:17.7px;line-height:17.7px;color:#ababab;font-weight:normal;font-style:normal;letter-spacing:0.2px;white-space:nowrap;-webkit-text-stroke:0.3px #ababab">Aller au début</div>
<svg style="position:absolute;left:580.95px;top:683.55px;overflow:visible" width="8.70" height="8.70" viewBox="0 0 100 100" preserveAspectRatio="none"><path d="M100,100 L0,0 M0,70 V0 H70" fill="none" stroke="#ababab" stroke-width="1.7" vector-effect="non-scaling-stroke" stroke-linejoin="miter" stroke-linecap="butt"/></svg>
<div style="position:absolute;left:261.40px;top:709.82px;font-size:17.7px;line-height:17.7px;color:#ababab;font-weight:normal;font-style:normal;letter-spacing:0.2px;white-space:nowrap;-webkit-text-stroke:0.3px #ababab">Aller au point d’entrée</div>
<svg style="position:absolute;left:548.35px;top:711.75px;overflow:visible" width="12.10" height="11.40" viewBox="0 0 100 100" preserveAspectRatio="none"><path d="M50,0 L100,51 H75 V100 H25 V51 H0 Z" fill="none" stroke="#ababab" stroke-width="1.5" vector-effect="non-scaling-stroke" stroke-linejoin="miter" stroke-linecap="butt"/></svg>
<div style="position:absolute;left:579.60px;top:709.82px;font-size:17.7px;line-height:17.7px;color:#ababab;font-weight:normal;font-style:normal;letter-spacing:0px;white-space:nowrap;-webkit-text-stroke:0.3px #ababab">I</div>
<div style="position:absolute;left:261.40px;top:739.02px;font-size:17.7px;line-height:17.7px;color:#ababab;font-weight:normal;font-style:normal;letter-spacing:0.2px;white-space:nowrap;-webkit-text-stroke:0.3px #ababab">Aller au point de sortie</div>
<svg style="position:absolute;left:548.35px;top:740.95px;overflow:visible" width="12.10" height="11.40" viewBox="0 0 100 100" preserveAspectRatio="none"><path d="M50,0 L100,51 H75 V100 H25 V51 H0 Z" fill="none" stroke="#ababab" stroke-width="1.5" vector-effect="non-scaling-stroke" stroke-linejoin="miter" stroke-linecap="butt"/></svg>
<div style="position:absolute;left:579.60px;top:739.02px;font-size:17.7px;line-height:17.7px;color:#ababab;font-weight:normal;font-style:normal;letter-spacing:0px;white-space:nowrap;-webkit-text-stroke:0.3px #ababab">O</div>
<div style="position:absolute;left:261.40px;top:768.22px;font-size:17.7px;line-height:17.7px;color:#ababab;font-weight:normal;font-style:normal;letter-spacing:0.2px;white-space:nowrap;-webkit-text-stroke:0.3px #ababab">Annuler les modifications</div>
<svg style="position:absolute;left:548.35px;top:770.15px;overflow:visible" width="12.10" height="11.40" viewBox="0 0 100 100" preserveAspectRatio="none"><path d="M34,17 A17,17 0 1,0 17,34 L83,34 A17,17 0 1,0 66,17 L66,83 A17,17 0 1,0 83,66 L17,66 A17,17 0 1,0 34,83 Z" fill="none" stroke="#ababab" stroke-width="1.5" vector-effect="non-scaling-stroke" stroke-linejoin="miter" stroke-linecap="butt"/></svg>
<div style="position:absolute;left:579.60px;top:768.22px;font-size:17.7px;line-height:17.7px;color:#ababab;font-weight:normal;font-style:normal;letter-spacing:0px;white-space:nowrap;-webkit-text-stroke:0.3px #ababab">Z</div>
<div style="position:absolute;left:261.40px;top:797.42px;font-size:17.7px;line-height:17.7px;color:#ababab;font-weight:normal;font-style:normal;letter-spacing:0.2px;white-space:nowrap;-webkit-text-stroke:0.3px #ababab">Arrêter</div>
<div style="position:absolute;left:579.60px;top:797.42px;font-size:17.7px;line-height:17.7px;color:#ababab;font-weight:normal;font-style:normal;letter-spacing:0px;white-space:nowrap;-webkit-text-stroke:0.3px #ababab">K</div>
<div style="position:absolute;left:261.40px;top:826.62px;font-size:17.7px;line-height:17.7px;color:#ababab;font-weight:normal;font-style:normal;letter-spacing:0.2px;white-space:nowrap;-webkit-text-stroke:0.3px #ababab">Arrêter</div>
<svg style="position:absolute;left:550.05px;top:829.35px;overflow:visible" width="10.40" height="4.30" viewBox="0 0 100 100" preserveAspectRatio="none"><path d="M0,100 L50,0 L100,100" fill="none" stroke="#ababab" stroke-width="1.5" vector-effect="non-scaling-stroke" stroke-linejoin="miter" stroke-linecap="butt"/></svg>
<div style="position:absolute;left:579.60px;top:826.62px;font-size:17.7px;line-height:17.7px;color:#ababab;font-weight:normal;font-style:normal;letter-spacing:0px;white-space:nowrap;-webkit-text-stroke:0.3px #ababab">K</div>
<div style="position:absolute;left:621.5px;top:532.8px;width:20.5px;height:312.80000000000007px;background:#1e1e1e;border-left:1px solid #262626"></div>
<div style="position:absolute;left:627px;top:544.3px;width:9.8px;height:59.7px;border-radius:5px;background:#4a4a4a"></div>
<div style="position:absolute;left:252px;top:504px;width:390px;height:28.799999999999955px;background:#4a4a4a;border-bottom:1px solid #3a3a3a"></div>
<div style="position:absolute;left:257.80px;top:510.30px;font-size:15px;line-height:15px;color:#ffffff;font-weight:bold;font-style:normal;letter-spacing:-0.15px;white-space:nowrap">Commande</div>
<svg style="position:absolute;left:461.55px;top:515.65px;overflow:visible" width="8.10" height="4.10" viewBox="0 0 100 100" preserveAspectRatio="none"><path d="M0,100 L50,0 L100,100" fill="none" stroke="#c4c4c4" stroke-width="1.5" vector-effect="non-scaling-stroke" stroke-linejoin="miter" stroke-linecap="butt"/></svg>
<div style="position:absolute;left:485.20px;top:510.30px;font-size:15px;line-height:15px;color:#ffffff;font-weight:bold;font-style:normal;letter-spacing:0.7px;white-space:nowrap">Touches...</div>
<div style="position:absolute;left:576.50px;top:510.30px;font-size:15px;line-height:15px;color:#ffffff;font-weight:bold;font-style:normal;letter-spacing:0.4px;white-space:nowrap">Tou...</div>
<div style="position:absolute;left:478.2px;top:506px;width:1px;height:25px;background:#5a5a5a;"></div>
<div style="position:absolute;left:570px;top:506px;width:1px;height:25px;background:#5a5a5a;"></div>
<div style="position:absolute;left:620.5px;top:506px;width:1.5px;height:25px;background:#2a2a2a;"></div>
<div style="position:absolute;left:478.2px;top:532.8px;width:1px;height:312.80000000000007px;background:#424242;"></div>
<div style="position:absolute;left:570px;top:532.8px;width:1.2px;height:312.80000000000007px;background:#424242;"></div>
<div style="position:absolute;left:662.5px;top:503px;width:434.29999999999995px;height:343.6px;background:#1e1e1e;border:1px solid #454545"></div>
<div style="position:absolute;left:663.5px;top:504px;width:432.29999999999995px;height:28.799999999999955px;background:#4a4a4a;border-bottom:1px solid #3a3a3a"></div>
<div style="position:absolute;left:670.00px;top:510.30px;font-size:15px;line-height:15px;color:#ffffff;font-weight:bold;font-style:normal;letter-spacing:0.24px;white-space:nowrap">Touches de m...</div>
<div style="position:absolute;left:796.00px;top:510.30px;font-size:15px;line-height:15px;color:#ffffff;font-weight:bold;font-style:normal;letter-spacing:-0.15px;white-space:nowrap">Commande</div>
<div style="position:absolute;left:789.2px;top:506px;width:1.2px;height:25px;background:#2a2a2a;"></div>
<div style="position:absolute;left:1075.3px;top:506px;width:1.2px;height:25px;background:#2a2a2a;"></div>
<div style="position:absolute;left:789.2px;top:532.8px;width:1.2px;height:312.80000000000007px;background:#424242;"></div>
<div style="position:absolute;left:1076.3px;top:532.8px;width:1px;height:312.80000000000007px;background:#2a2a2a;"></div>
<div style="position:absolute;left:1082px;top:537.7px;width:10px;height:207.8px;border-radius:5px;background:#4a4a4a"></div>
<div style="position:absolute;right:350.60px;top:539.62px;font-size:17.7px;line-height:17.7px;color:#ababab;font-weight:normal;font-style:normal;letter-spacing:0.05px;white-space:nowrap;text-align:right;-webkit-text-stroke:0.3px #ababab">Aucune</div>
<div style="position:absolute;left:802.4px;top:539.00px;width:174.00px;height:18.4px;border-radius:3px;background:#654e7f"></div>
<div style="position:absolute;left:821.90px;top:541.84px;font-size:13.3px;line-height:13.3px;color:#cdc8d2;font-weight:normal;font-style:normal;letter-spacing:0.02px;white-space:nowrap">Définir le point d’entrée</div>
<svg style="position:absolute;left:766.93px;top:570.13px;overflow:visible" width="13.35" height="11.95" viewBox="0 0 100 100" preserveAspectRatio="none"><path d="M34,17 A17,17 0 1,0 17,34 L83,34 A17,17 0 1,0 66,17 L66,83 A17,17 0 1,0 83,66 L17,66 A17,17 0 1,0 34,83 Z" fill="none" stroke="#bdbdbd" stroke-width="1.45" vector-effect="non-scaling-stroke" stroke-linejoin="miter" stroke-linecap="butt"/></svg>
<div style="position:absolute;left:802.4px;top:568.20px;width:133.40px;height:18.4px;border-radius:3px;background:#7b7749"></div>
<div style="position:absolute;left:821.90px;top:571.04px;font-size:13.3px;line-height:13.3px;color:#d8d5c4;font-weight:normal;font-style:normal;letter-spacing:-0.37px;white-space:nowrap">Ajouter un fichier</div>
<svg style="position:absolute;left:766.93px;top:599.33px;overflow:visible" width="13.35" height="11.95" viewBox="0 0 100 100" preserveAspectRatio="none"><path d="M50,0 L100,51 H75 V100 H25 V51 H0 Z" fill="none" stroke="#bdbdbd" stroke-width="1.45" vector-effect="non-scaling-stroke" stroke-linejoin="miter" stroke-linecap="butt"/></svg>
<div style="position:absolute;left:802.4px;top:597.40px;width:166.60px;height:18.4px;border-radius:3px;background:#654e7f"></div>
<div style="position:absolute;left:821.90px;top:600.24px;font-size:13.3px;line-height:13.3px;color:#cdc8d2;font-weight:normal;font-style:normal;letter-spacing:-0.02px;white-space:nowrap">Aller au point d’entrée</div>
<svg style="position:absolute;left:766.93px;top:628.53px;overflow:visible" width="13.35" height="11.95" viewBox="0 0 100 100" preserveAspectRatio="none"><path d="M0,0 H28 L66,100 H100 M57,0 H100" fill="none" stroke="#bdbdbd" stroke-width="1.45" vector-effect="non-scaling-stroke" stroke-linejoin="miter" stroke-linecap="butt"/></svg>
<svg style="position:absolute;left:770.75px;top:658.55px;overflow:visible" width="9.50" height="5.00" viewBox="0 0 100 100" preserveAspectRatio="none"><path d="M0,100 L50,0 L100,100" fill="none" stroke="#bdbdbd" stroke-width="1.5" vector-effect="non-scaling-stroke" stroke-linejoin="miter" stroke-linecap="butt"/></svg>
<div style="position:absolute;left:802.4px;top:655.80px;width:174.60px;height:18.4px;border-radius:3px;background:#654e7f"></div>
<div style="position:absolute;left:821.90px;top:658.64px;font-size:13.3px;line-height:13.3px;color:#cdc8d2;font-weight:normal;font-style:normal;letter-spacing:0.02px;white-space:nowrap">Définir le point d’entrée</div>
<svg style="position:absolute;left:766.93px;top:686.93px;overflow:visible" width="13.35" height="11.95" viewBox="0 0 100 100" preserveAspectRatio="none"><path d="M34,17 A17,17 0 1,0 17,34 L83,34 A17,17 0 1,0 66,17 L66,83 A17,17 0 1,0 83,66 L17,66 A17,17 0 1,0 34,83 Z" fill="none" stroke="#bdbdbd" stroke-width="1.45" vector-effect="non-scaling-stroke" stroke-linejoin="miter" stroke-linecap="butt"/></svg>
<svg style="position:absolute;left:749.93px;top:686.93px;overflow:visible" width="13.35" height="11.95" viewBox="0 0 100 100" preserveAspectRatio="none"><path d="M50,0 L100,51 H75 V100 H25 V51 H0 Z" fill="none" stroke="#bdbdbd" stroke-width="1.45" vector-effect="non-scaling-stroke" stroke-linejoin="miter" stroke-linecap="butt"/></svg>
<svg style="position:absolute;left:766.93px;top:716.13px;overflow:visible" width="13.35" height="11.95" viewBox="0 0 100 100" preserveAspectRatio="none"><path d="M34,17 A17,17 0 1,0 17,34 L83,34 A17,17 0 1,0 66,17 L66,83 A17,17 0 1,0 83,66 L17,66 A17,17 0 1,0 34,83 Z" fill="none" stroke="#bdbdbd" stroke-width="1.45" vector-effect="non-scaling-stroke" stroke-linejoin="miter" stroke-linecap="butt"/></svg>
<svg style="position:absolute;left:749.93px;top:716.13px;overflow:visible" width="13.35" height="11.95" viewBox="0 0 100 100" preserveAspectRatio="none"><path d="M0,0 H28 L66,100 H100 M57,0 H100" fill="none" stroke="#bdbdbd" stroke-width="1.45" vector-effect="non-scaling-stroke" stroke-linejoin="miter" stroke-linecap="butt"/></svg>
<div style="position:absolute;left:802.4px;top:714.20px;width:213.00px;height:18.4px;border-radius:3px;background:#7b7749"></div>
<div style="position:absolute;left:821.90px;top:717.04px;font-size:13.3px;line-height:13.3px;color:#d8d5c4;font-weight:normal;font-style:normal;letter-spacing:-0.27px;white-space:nowrap">Ajouter une séquence d’images</div>
<svg style="position:absolute;left:766.93px;top:745.33px;overflow:visible" width="13.35" height="11.95" viewBox="0 0 100 100" preserveAspectRatio="none"><path d="M34,17 A17,17 0 1,0 17,34 L83,34 A17,17 0 1,0 66,17 L66,83 A17,17 0 1,0 83,66 L17,66 A17,17 0 1,0 34,83 Z" fill="none" stroke="#bdbdbd" stroke-width="1.45" vector-effect="non-scaling-stroke" stroke-linejoin="miter" stroke-linecap="butt"/></svg>
<svg style="position:absolute;left:753.75px;top:746.15px;overflow:visible" width="9.50" height="5.00" viewBox="0 0 100 100" preserveAspectRatio="none"><path d="M0,100 L50,0 L100,100" fill="none" stroke="#bdbdbd" stroke-width="1.5" vector-effect="non-scaling-stroke" stroke-linejoin="miter" stroke-linecap="butt"/></svg>
<div style="position:absolute;left:802.4px;top:743.40px;width:239.20px;height:18.4px;border-radius:3px;background:#7b7749"></div>
<div style="position:absolute;left:821.90px;top:746.24px;font-size:13.3px;line-height:13.3px;color:#d8d5c4;font-weight:normal;font-style:normal;letter-spacing:-0.26px;white-space:nowrap">Ajouter un groupe de sons Surround</div>
<svg style="position:absolute;left:766.93px;top:774.53px;overflow:visible" width="13.35" height="11.95" viewBox="0 0 100 100" preserveAspectRatio="none"><path d="M50,0 L100,51 H75 V100 H25 V51 H0 Z" fill="none" stroke="#bdbdbd" stroke-width="1.45" vector-effect="non-scaling-stroke" stroke-linejoin="miter" stroke-linecap="butt"/></svg>
<svg style="position:absolute;left:749.93px;top:774.53px;overflow:visible" width="13.35" height="11.95" viewBox="0 0 100 100" preserveAspectRatio="none"><path d="M0,0 H28 L66,100 H100 M57,0 H100" fill="none" stroke="#bdbdbd" stroke-width="1.45" vector-effect="non-scaling-stroke" stroke-linejoin="miter" stroke-linecap="butt"/></svg>
<svg style="position:absolute;left:766.93px;top:803.73px;overflow:visible" width="13.35" height="11.95" viewBox="0 0 100 100" preserveAspectRatio="none"><path d="M50,0 L100,51 H75 V100 H25 V51 H0 Z" fill="none" stroke="#bdbdbd" stroke-width="1.45" vector-effect="non-scaling-stroke" stroke-linejoin="miter" stroke-linecap="butt"/></svg>
<svg style="position:absolute;left:753.75px;top:804.55px;overflow:visible" width="9.50" height="5.00" viewBox="0 0 100 100" preserveAspectRatio="none"><path d="M0,100 L50,0 L100,100" fill="none" stroke="#bdbdbd" stroke-width="1.5" vector-effect="non-scaling-stroke" stroke-linejoin="miter" stroke-linecap="butt"/></svg>
<svg style="position:absolute;left:766.93px;top:832.93px;overflow:visible" width="13.35" height="11.95" viewBox="0 0 100 100" preserveAspectRatio="none"><path d="M0,0 H28 L66,100 H100 M57,0 H100" fill="none" stroke="#bdbdbd" stroke-width="1.45" vector-effect="non-scaling-stroke" stroke-linejoin="miter" stroke-linecap="butt"/></svg>
<svg style="position:absolute;left:753.75px;top:833.75px;overflow:visible" width="9.50" height="5.00" viewBox="0 0 100 100" preserveAspectRatio="none"><path d="M0,100 L50,0 L100,100" fill="none" stroke="#bdbdbd" stroke-width="1.5" vector-effect="non-scaling-stroke" stroke-linejoin="miter" stroke-linecap="butt"/></svg>
<div style="position:absolute;left:834.3px;top:871.7px;width:100.6px;height:24.8px;border-radius:4px;background:#4b4b4b;box-shadow:0 0.5px 1.5px rgba(0,0,0,0.6)"></div>
<div style="position:absolute;left:856.70px;top:876.07px;font-size:17.4px;line-height:17.4px;color:#e0e0e0;font-weight:normal;font-style:normal;letter-spacing:-0.1px;white-space:nowrap;-webkit-text-stroke:0.35px #e0e0e0">Fermer</div>
<div style="position:absolute;left:959.9px;top:870.2px;width:137.7px;height:25.1px;border-radius:4px;background:#2b2b2b"></div>
<div style="position:absolute;left:984.50px;top:876.07px;font-size:17.4px;line-height:17.4px;color:#505050;font-weight:normal;font-style:normal;letter-spacing:0.14px;white-space:nowrap;-webkit-text-stroke:0.2px #505050">Enregistrer</div>
</div></body></html>
